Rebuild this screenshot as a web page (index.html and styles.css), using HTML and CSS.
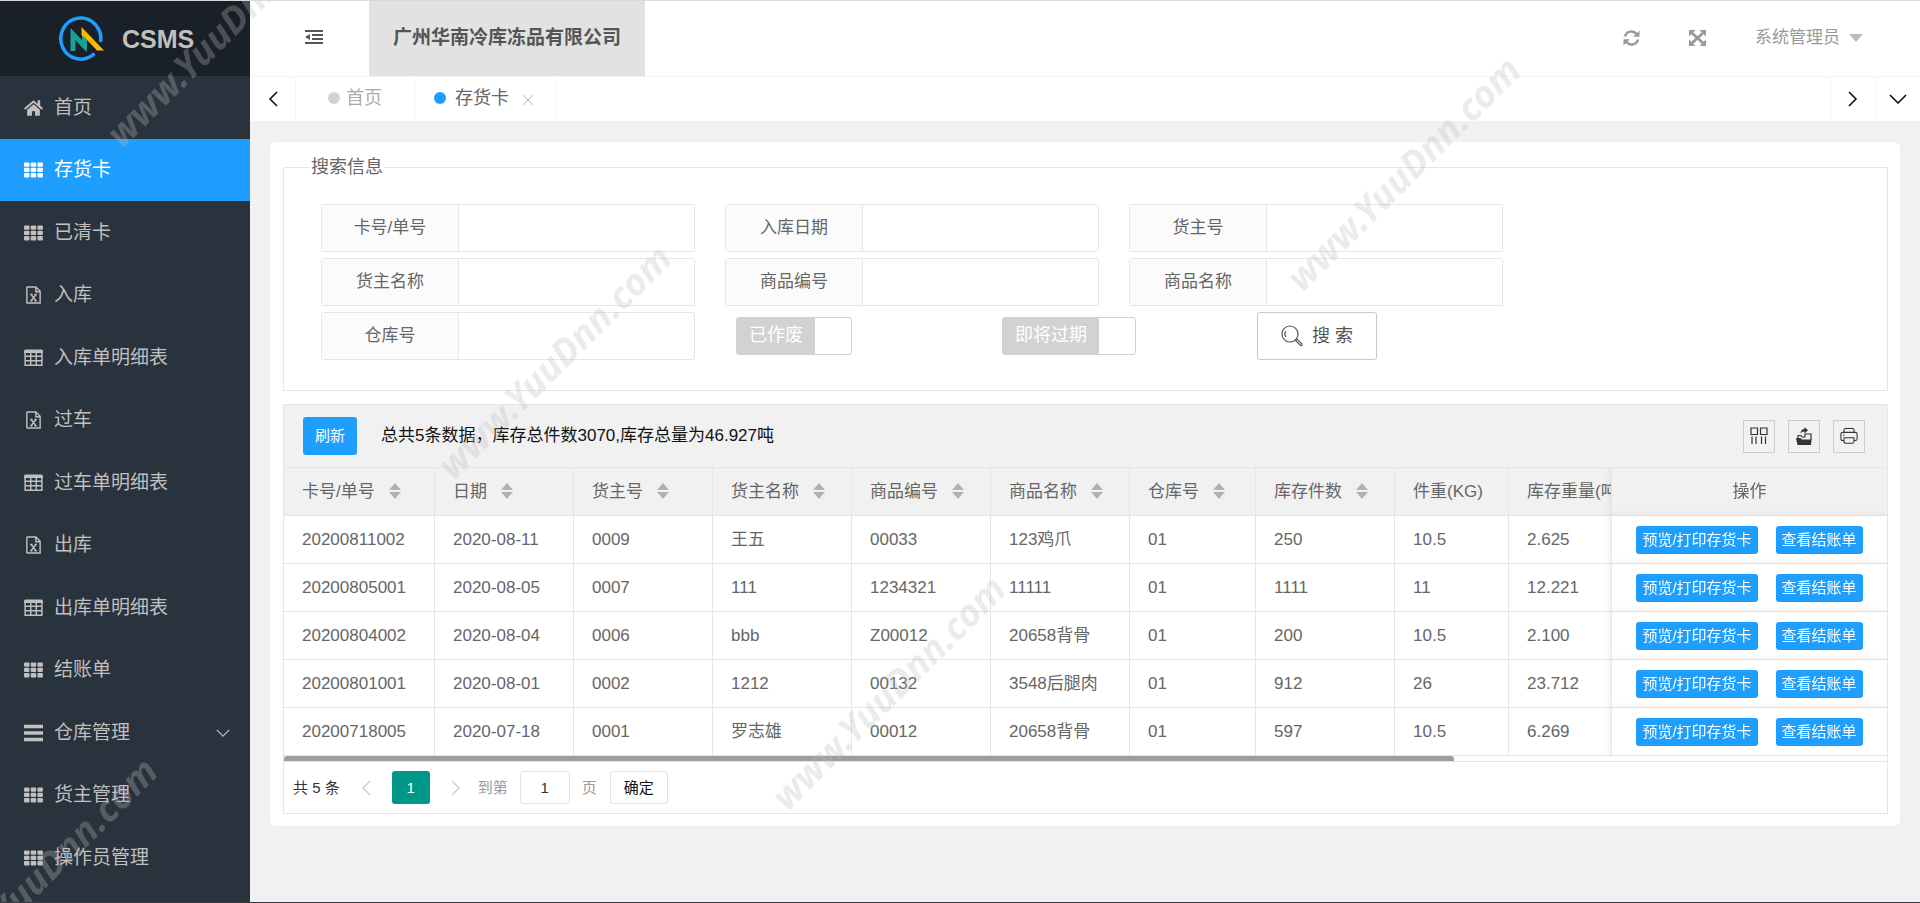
FILE: index.html
```html
<!DOCTYPE html>
<html lang="zh-CN">
<head>
<meta charset="utf-8">
<title>CSMS - 存货卡</title>
<meta name="viewport" content="width=device-width, initial-scale=1">
<link rel="stylesheet" href="styles.css">
</head>
<body>
<svg class="defs" aria-hidden="true">
  <symbol id="i-home" viewBox="0 0 17 16"><path d="M8.500 1 0 8.300l1.200 1.200L8.500 3.300l7.300 6.200L17 8.300 14.500 6V1h-2.300v3.200z"/><path d="M8.500 4.600 2.800 9.500V15h4.300v-4.200h2.800V15h4.300V9.500z"/></symbol>
  <symbol id="i-grid" viewBox="0 0 19 15"><g><rect x="0" y="0" width="5.500" height="4.300" rx="1"/><rect x="6.700" y="0" width="5.500" height="4.300" rx="1"/><rect x="13.400" y="0" width="5.500" height="4.300" rx="1"/><rect x="0" y="5.300" width="5.500" height="4.300" rx="1"/><rect x="6.700" y="5.300" width="5.500" height="4.300" rx="1"/><rect x="13.400" y="5.300" width="5.500" height="4.300" rx="1"/><rect x="0" y="10.600" width="5.500" height="4.300" rx="1"/><rect x="6.700" y="10.600" width="5.500" height="4.300" rx="1"/><rect x="13.400" y="10.600" width="5.500" height="4.300" rx="1"/></g></symbol>
  <symbol id="i-file" viewBox="0 0 16 19"><path fill="none" stroke="currentColor" stroke-width="1.500" d="M1.500 1h9L15 5.500V18H1.500q-.5 0-.5-.5v-16q0-.5.5-.5zM10.500 1v5H15"/><path fill="none" stroke="currentColor" stroke-width="1.500" d="m5.500 9 5 6.500m0-6.500-5 6.500M4.500 9h2.500m2 0h2.500m-7 6.500H7m2 0h2.500"/></symbol>
  <symbol id="i-table" viewBox="0 0 17 15"><path fill="none" stroke="currentColor" stroke-width="1.300" d="M1 2h15v12H1zM1 6h15M1 10h15M6 2v12M11 2v12"/><path d="M0 1.500Q0 0 1.500 0h14Q17 0 17 1.500V3H0z"/></symbol>
  <symbol id="i-bars" viewBox="0 0 16 14"><path d="M0 0h16v3H0zm0 5.500h16v3H0zM0 11h16v3H0z"/></symbol>
  <symbol id="i-chev" viewBox="0 0 18 10"><path fill="none" stroke="currentColor" stroke-width="1.600" d="m1 1 8 8 8-8"/></symbol>
  <symbol id="i-left" viewBox="0 0 10 16"><path fill="none" stroke="currentColor" stroke-width="1.600" d="M9 1 2 8l7 7"/></symbol>
  <symbol id="i-right" viewBox="0 0 10 16"><path fill="none" stroke="currentColor" stroke-width="1.600" d="m1 1 7 7-7 7"/></symbol>
  <symbol id="i-sort" viewBox="0 0 12 16"><path d="m6 0 6 7H0zM0 9h12l-6 7z"/></symbol>
</svg>
<div class="app">
  <aside class="side">
    <div class="brand">
      <svg class="logo" viewBox="0 0 46 46" aria-hidden="true"><path d="M36.500 37.500A20 20.500 0 1 1 42.500 26" fill="none" stroke="#1e9fff" stroke-width="3.500"/><path d="M12.500 12v23h5V24l7 8 4.500 4V24.500L24 19v5z" fill="#1aa094"/><path d="M23.500 11 46 34.500h-7L29 24l-5.500-5z" fill="#ffb800"/></svg>
      <span>CSMS</span>
    </div>
    <nav>
      <ul class="menu">
        <li><a href="#"><svg class="ico"><use href="#i-home"/></svg>首页</a></li>
        <li><a href="#" class="on" aria-current="page"><svg class="ico"><use href="#i-grid"/></svg>存货卡</a></li>
        <li><a href="#"><svg class="ico"><use href="#i-grid"/></svg>已清卡</a></li>
        <li><a href="#"><svg class="ico"><use href="#i-file"/></svg>入库</a></li>
        <li><a href="#"><svg class="ico"><use href="#i-table"/></svg>入库单明细表</a></li>
        <li><a href="#"><svg class="ico"><use href="#i-file"/></svg>过车</a></li>
        <li><a href="#"><svg class="ico"><use href="#i-table"/></svg>过车单明细表</a></li>
        <li><a href="#"><svg class="ico"><use href="#i-file"/></svg>出库</a></li>
        <li><a href="#"><svg class="ico"><use href="#i-table"/></svg>出库单明细表</a></li>
        <li><a href="#"><svg class="ico"><use href="#i-grid"/></svg>结账单</a></li>
        <li><a href="#"><svg class="ico"><use href="#i-bars"/></svg>仓库管理<svg class="more"><use href="#i-chev"/></svg></a></li>
        <li><a href="#"><svg class="ico"><use href="#i-grid"/></svg>货主管理</a></li>
        <li><a href="#"><svg class="ico"><use href="#i-grid"/></svg>操作员管理</a></li>
      </ul>
    </nav>
  </aside>

  <div class="main">
    <header class="top">
      <button class="fold" type="button" aria-label="收起菜单"><svg width="18" height="14" viewBox="0 0 18 14"><path d="M0 0h18v2H0zm7 4h11v2H7zm0 4h11v2H7zm-7 4h18v2H0zM5 4v6L0 7z"/></svg></button>
      <h1 class="company">广州华南冷库冻品有限公司</h1>
      <div class="tools">
        <button type="button" aria-label="刷新页面"><svg width="17" height="16" viewBox="0 0 17 16"><path fill="none" stroke="currentColor" stroke-width="2.500" d="M2 6.500A6.500 6.500 0 0 1 13.500 4M15 9.500A6.500 6.500 0 0 1 3.500 12"/><path d="M16.500.500v6.300h-6.300zM.5 15.500V9.200h6.300z"/></svg></button>
        <button type="button" aria-label="全屏"><svg width="17" height="16" viewBox="0 0 17 16"><path stroke="currentColor" stroke-width="2.800" d="m3 3 11 10M14 3 3 13"/><path d="M0 0h6.500L0 6.500zM17 0v6.500L10.500 0zM0 16V9.500L6.500 16zM17 16h-6.500L17 9.500z"/></svg></button>
        <button class="user" type="button">系统管理员<svg width="14" height="8" viewBox="0 0 14 8"><path d="M0 0h14L7 8z"/></svg></button>
      </div>
    </header>

    <div class="tabs">
      <button class="tab-nav" type="button" aria-label="向左"><svg width="10" height="16"><use href="#i-left"/></svg></button>
      <a class="tab" href="#"><i class="dot"></i>首页</a>
      <a class="tab tab-on" href="#"><i class="dot"></i>存货卡<svg class="close" width="10" height="10" viewBox="0 0 10 10"><path fill="none" stroke="currentColor" d="m0 0 10 10M10 0 0 10"/></svg></a>
      <span class="fill"></span>
      <button class="tab-nav right" type="button" aria-label="向右"><svg width="10" height="16"><use href="#i-right"/></svg></button>
      <button class="tab-nav right" type="button" aria-label="更多"><svg width="18" height="10"><use href="#i-chev"/></svg></button>
    </div>

    <main class="card">
      <form>
        <fieldset class="search">
          <legend>搜索信息</legend>
          <div class="row">
            <div class="field"><label for="f1">卡号/单号</label><input id="f1" type="text"></div>
            <div class="field"><label for="f2">入库日期</label><input id="f2" type="text"></div>
            <div class="field"><label for="f3">货主号</label><input id="f3" type="text"></div>
          </div>
          <div class="row">
            <div class="field"><label for="f4">货主名称</label><input id="f4" type="text"></div>
            <div class="field"><label for="f5">商品编号</label><input id="f5" type="text"></div>
            <div class="field"><label for="f6">商品名称</label><input id="f6" type="text"></div>
          </div>
          <div class="row">
            <div class="field"><label for="f7">仓库号</label><input id="f7" type="text"></div>
            <div class="switches">
              <label class="switch"><input type="checkbox"><span>已作废</span></label>
              <label class="switch"><input type="checkbox"><span>即将过期</span></label>
            </div>
            <button class="find" type="button"><svg width="22" height="22" viewBox="0 0 22 22"><g fill="none" stroke="currentColor" stroke-width="1.200"><circle cx="9" cy="9" r="8"/><path d="M5 12a5 5 0 0 1 0-6m9.500 9.500 1.500-1.500 5 5q.5 2-1.500 1.500z"/></g></svg>搜 索</button>
          </div>
        </fieldset>
      </form>

      <section class="grid">
        <div class="bar">
          <button class="btn btn-lg" type="button">刷新</button>
          <span class="sum">总共5条数据，库存总件数3070,库存总量为46.927吨</span>
          <div class="acts">
            <button type="button" aria-label="筛选列"><svg width="18" height="18" viewBox="0 0 18 18"><path fill="none" stroke="currentColor" stroke-width="1.200" d="M1 1h6.500v6.500H1zm9.500 0H17v6.500h-6.500zM2 9.500V17m4-7.500V17m5.500-7.500V17m4-7.500V17"/></svg></button>
            <button type="button" aria-label="导出"><svg width="18" height="18" viewBox="0 0 18 18"><path d="M1 11h4.500l1.500 1.500h9.500L16 18H2.500zM9.500 0 13 3.300 9.500 6.500V4.600Q7 4.500 5.500 6.500 6 2.200 9.500 2z"/><path fill="none" stroke="currentColor" stroke-width="1.200" d="M3 11V8.500h3L7 10h3V7h6v6"/></svg></button>
            <button type="button" aria-label="打印"><svg width="18" height="18" viewBox="0 0 20 18"><g fill="none" stroke="currentColor" stroke-width="1.200"><path d="M4.500 5V2q0-1.300 1.300-1.300h8.400q1.300 0 1.300 1.300v3"/><path d="M4.500 14H3q-2 0-2-2V7q0-2 2-2h14q2 0 2 2v5q0 2-2 2h-1.500M3.500 8H5M4.500 11h11v4q0 2-2 2h-7q-2 0-2-2z"/></g></svg></button>
          </div>
        </div>
        <div class="scroll">
          <table>
            <colgroup><col class="c-card"><col class="c-m"><col class="c-m"><col class="c-m"><col class="c-m"><col class="c-m"><col class="c-s"><col class="c-m"><col class="c-w"><col class="c-m"><col class="c-op"></colgroup>
            <thead>
              <tr>
                <th>卡号/单号<svg class="sort"><use href="#i-sort"/></svg></th>
                <th>日期<svg class="sort"><use href="#i-sort"/></svg></th>
                <th>货主号<svg class="sort"><use href="#i-sort"/></svg></th>
                <th>货主名称<svg class="sort"><use href="#i-sort"/></svg></th>
                <th>商品编号<svg class="sort"><use href="#i-sort"/></svg></th>
                <th>商品名称<svg class="sort"><use href="#i-sort"/></svg></th>
                <th>仓库号<svg class="sort"><use href="#i-sort"/></svg></th>
                <th>库存件数<svg class="sort"><use href="#i-sort"/></svg></th>
                <th>件重(KG)</th>
                <th>库存重量(吨)</th>
                <th class="op">操作</th>
              </tr>
            </thead>
            <tbody>
              <tr><td>20200811002</td><td>2020-08-11</td><td>0009</td><td>王五</td><td>00033</td><td>123鸡爪</td><td>01</td><td>250</td><td>10.5</td><td>2.625</td><td class="op"><button class="btn" type="button">预览/打印存货卡</button><button class="btn" type="button">查看结账单</button></td></tr>
              <tr><td>20200805001</td><td>2020-08-05</td><td>0007</td><td>111</td><td>1234321</td><td>11111</td><td>01</td><td>1111</td><td>11</td><td>12.221</td><td class="op"><button class="btn" type="button">预览/打印存货卡</button><button class="btn" type="button">查看结账单</button></td></tr>
              <tr><td>20200804002</td><td>2020-08-04</td><td>0006</td><td>bbb</td><td>Z00012</td><td>20658背骨</td><td>01</td><td>200</td><td>10.5</td><td>2.100</td><td class="op"><button class="btn" type="button">预览/打印存货卡</button><button class="btn" type="button">查看结账单</button></td></tr>
              <tr><td>20200801001</td><td>2020-08-01</td><td>0002</td><td>1212</td><td>00132</td><td>3548后腿肉</td><td>01</td><td>912</td><td>26</td><td>23.712</td><td class="op"><button class="btn" type="button">预览/打印存货卡</button><button class="btn" type="button">查看结账单</button></td></tr>
              <tr><td>20200718005</td><td>2020-07-18</td><td>0001</td><td>罗志雄</td><td>00012</td><td>20658背骨</td><td>01</td><td>597</td><td>10.5</td><td>6.269</td><td class="op"><button class="btn" type="button">预览/打印存货卡</button><button class="btn" type="button">查看结账单</button></td></tr>
            </tbody>
          </table>
        </div>
        <div class="track"><div class="thumb"></div></div>
        <div class="pager">
          <span class="total">共 5 条</span>
          <button class="arrow" type="button" aria-label="上一页"><svg width="10" height="16"><use href="#i-left"/></svg></button>
          <button class="page" type="button">1</button>
          <button class="arrow" type="button" aria-label="下一页"><svg width="10" height="16"><use href="#i-right"/></svg></button>
          <label for="pg">到第</label>
          <input id="pg" type="text" value="1">
          <span>页</span>
          <button class="ok" type="button">确定</button>
        </div>
      </section>
    </main>
  </div>

  <div class="marks" aria-hidden="true">
    <span class="mark m1">www.YuuDnn.com</span>
    <span class="mark m2">www.YuuDnn.com</span>
    <span class="mark m3">www.YuuDnn.com</span>
    <span class="mark m4">www.YuuDnn.com</span>
    <span class="mark m5">www.YuuDnn.com</span>
  </div>
</div>
</body>
</html>
```
FILE: styles.css
```css
* { box-sizing: border-box; }
body {
  margin: 0;
  font: 17px/24px "Liberation Sans", "Noto Sans CJK SC", sans-serif;
  color: #666;
  background: #f1f1f1;
}
button, input { font: inherit; color: inherit; margin: 0; }
button { cursor: pointer; padding: 0; border: 0; background: none; }
a { color: inherit; text-decoration: none; }
svg { fill: currentColor; flex: none; }
.defs { position: absolute; width: 0; height: 0; }

.app {
  position: relative;
  display: flex;
  min-height: 100vh;
  overflow: hidden;
  border-top: 1px solid #d9d9de;
  border-bottom: 1px solid #3a3a40;
}

/* Sidebar */
.side { width: 250px; flex: none; background: #28333e; color: #c2bfbf; }
.brand {
  display: flex;
  align-items: center;
  gap: 18px;
  height: 75px;
  padding-left: 58px;
  background: #192027;
  font-size: 25px;
  font-weight: bold;
}
.logo { width: 46px; height: 46px; }
.menu { list-style: none; margin: 0; padding: 0; font-size: 19px; }
.menu a { display: flex; align-items: center; height: 62px; padding: 0 20px 0 24px; }
.menu li:nth-child(odd) a { height: 63px; }
.menu .on { background: #1e9fff; color: #fff; }
.ico { width: 19px; height: 18px; margin-right: 11px; }
.more { width: 14px; height: 10px; margin-left: auto; }

/* Header */
.main { flex: 1; min-width: 0; }
.top { display: flex; height: 76px; background: #fff; border-bottom: 1px solid #f4f4f4; }
.fold { width: 119px; padding-left: 8px; color: #555; }
.company {
  margin: 0;
  padding: 0 24px;
  background: #e2e2e2;
  color: #555;
  font-size: 19px;
  line-height: 74px;
}
.tools { display: flex; align-items: center; gap: 49px; margin-left: auto; padding: 0 57px 2px 0; color: #999; }
.tools button { display: flex; align-items: center; }
.user { gap: 9px; }
.user svg { color: #bbb; }

.tabs { display: flex; height: 44px; background: #fff; }
.tab-nav { display: flex; align-items: center; justify-content: center; width: 46px; color: #111; border-right: 1px solid #f4f4f4; }
.tab-nav.right { width: 45px; border-right: 0; border-left: 1px solid #f4f4f4; }
.tab { display: flex; align-items: center; padding: 0 32px 2px; color: #aaa; border-right: 1px solid #f4f4f4; font-size: 18px; }
.dot { width: 12px; height: 12px; margin-right: 6px; border-radius: 50%; background: #d2d2d2; }
.tab-on { padding: 0 22px 2px 19px; color: #666; }
.tab-on .dot { margin-right: 9px; background: #1e9fff; }
.close { margin: 4px 0 0 14px; color: #bbb; }
.fill { flex: 1; }

/* Search */
.card { margin: 21px 20px; padding: 12px 12px 12px 13px; background: #fff; border-radius: 6px; }
.search { margin: 0; padding: 24px 37px; border: 1px solid #e6e6e6; min-width: 0; }
.search legend { margin-left: -12px; padding: 0 2px; font-size: 18px; line-height: 26px; }
.row { display: flex; flex-wrap: wrap; margin-bottom: 6px; column-gap: 30px; }
.field { display: flex; width: 374px; height: 48px; border: 1px solid #e6e6e6; border-radius: 3px; }
.field label { width: 137px; text-align: center; line-height: 45px; background: #fbfbfb; border-right: 1px solid #e6e6e6; }
.field input { flex: 1; min-width: 0; border: 0; background: none; padding: 0 12px; }
.switches { display: flex; align-items: center; justify-content: space-between; width: 400px; margin-left: 11px; }
.switch { display: flex; height: 38px; padding-right: 36px; background: #fff; border: 1px solid #d2d2d2; border-radius: 3px; cursor: pointer; }
.switch input { position: absolute; opacity: 0; }
.switch span { padding: 0 12px; line-height: 34px; background: #d2d2d2; color: #fff; font-size: 18px; }
.find { display: flex; align-items: center; gap: 9px; height: 48px; margin-left: 91px; padding: 0 23px; border: 1px solid #c9c9c9; border-radius: 3px; color: #555; font-size: 18px; }

/* Data grid */
.grid { margin-top: 13px; border: 1px solid #e6e6e6; }
.bar { display: flex; align-items: center; height: 63px; padding: 0 22px 0 19px; background: #f1f1f1; border-bottom: 1px solid #e6e6e6; }
.btn { height: 28px; padding: 0 6px; border-radius: 3px; background: #1e9fff; color: #fff; font-size: 15px; line-height: 28px; }
.btn-lg { height: 38px; padding: 0 12px; }
.sum { margin-left: 24px; color: #111; }
.acts { display: flex; gap: 13px; margin-left: auto; }
.acts button { display: flex; align-items: center; justify-content: center; width: 32px; height: 33px; border: 1px solid #ccc; color: #333; }

.scroll { overflow: hidden; }
table { width: 100%; min-width: 1640px; table-layout: fixed; border-spacing: 0; }
.c-card { width: 151px; }
.c-m { width: 139px; }
.c-s { width: 126px; }
.c-w { width: 114px; }
.c-op { width: 276px; }
th, td { height: 48px; padding: 0 18px; text-align: left; font-weight: normal; white-space: nowrap; border-right: 1px solid #e6e6e6; border-bottom: 1px solid #e6e6e6; }
th { background: #f1f1f1; }
.sort { width: 12px; height: 16px; margin-left: 14px; vertical-align: -2px; color: #b2b2b2; }
.op { position: sticky; right: 0; padding: 0; text-align: center; background: #fff; border-right: 0; border-left: 1px solid #e6e6e6; box-shadow: -1px 0 8px rgba(0, 0, 0, .08); }
th.op { background: #f1f1f1; }
.op .btn + .btn { margin-left: 18px; }
.track { height: 6px; border-bottom: 1px solid #e6e6e6; }
.thumb { width: 73%; height: 5px; border-radius: 3px 3px 0 0; background: #9c9ca1; }

.pager { display: flex; align-items: center; height: 51px; padding-left: 9px; font-size: 15px; color: #999; }
.total { color: #333; }
.arrow { display: flex; justify-content: center; width: 52px; color: #d2d2d2; }
.page { width: 38px; height: 33px; border-radius: 3px; background: #009688; color: #fff; }
.pager label { margin-left: -4px; }
.pager input { width: 50px; height: 33px; margin: 0 12px; border: 1px solid #e2e2e2; border-radius: 3px; text-align: center; color: #333; }
.ok { height: 33px; margin-left: 13px; padding: 0 13px; border: 1px solid #e2e2e2; border-radius: 3px; color: #111; }

/* Watermark layer */
.marks { position: absolute; inset: 0; overflow: hidden; pointer-events: none; }
.mark {
  position: absolute;
  transform: translate(-50%, -50%) rotate(-45deg);
  font: italic bold 37px/40px "Noto Sans", sans-serif;
  color: rgba(190, 190, 190, .3);
}
.m1 { left: 223px; top: 28px; }
.m2 { left: 1403px; top: 172px; }
.m3 { left: 554px; top: 360px; }
.m4 { left: 888px; top: 691px; }
.m5 { left: 40px; top: 873px; }
```
